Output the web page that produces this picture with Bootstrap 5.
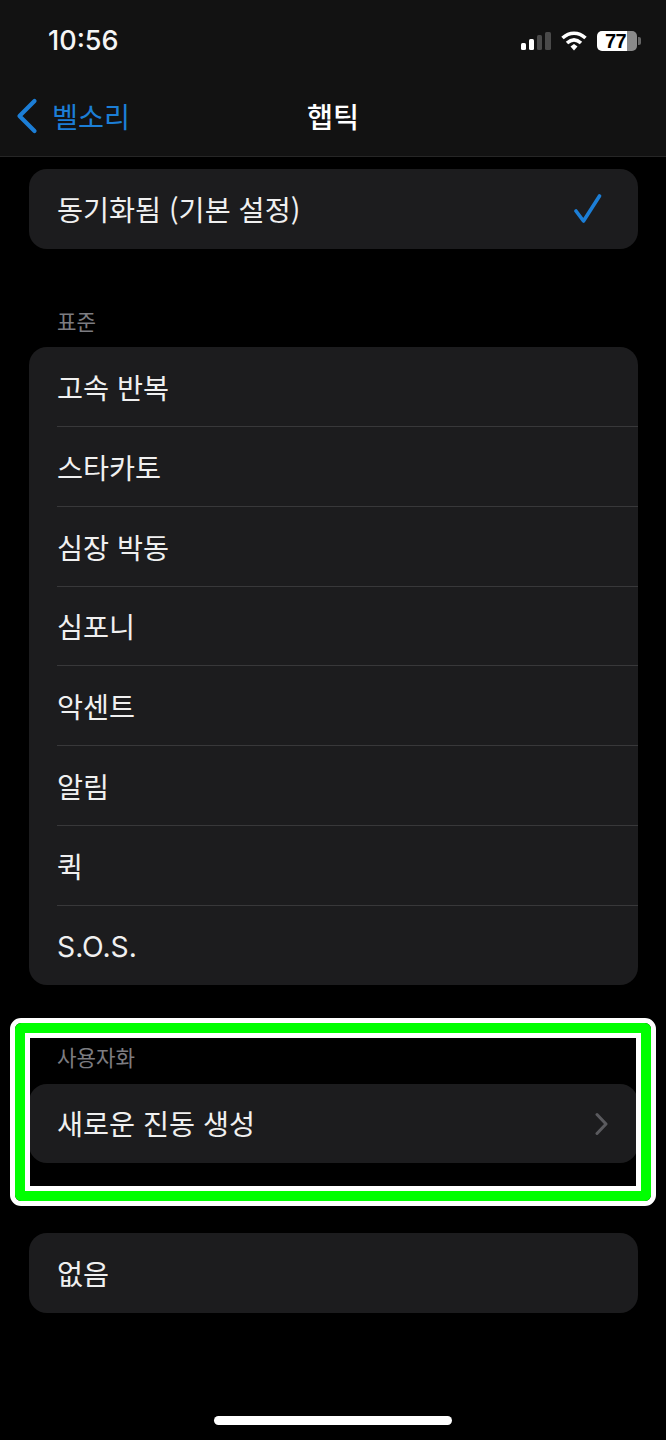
<!doctype html>
<html lang="ko"><head><meta charset="utf-8">
<link href="https://cdn.jsdelivr.net/npm/bootstrap@5.3.0/dist/css/bootstrap.min.css" rel="stylesheet">
<style>
html,body{background:#000;margin:0}
body{font-family:"Noto Sans CJK KR","Liberation Sans",sans-serif;color:#f2f2f2;width:666px;height:1440px;position:relative;overflow:hidden}
.top-bar{background:#121212;height:157px;border-bottom:1px solid #262626}
.status-row{height:81px;padding:0 25px 0 48px}
.clock{font-family:"Inter","Liberation Sans",sans-serif;font-weight:500;font-size:27px;line-height:1;color:#f5f5f5;margin-top:-1px}
.nav-row{height:70px;position:relative}
.back-link{color:#1c7ed6;font-size:28.3px;line-height:1;padding-left:16px;gap:14px}
.screen-title{position:absolute;left:0;right:0;top:0;bottom:0;font-size:28.3px;font-weight:500;color:#fff}
.content-area{padding:12px 28.500px 0}
.top-bar + .content-area{margin-top:0}
.group-card{background:#1c1c1e;border-radius:18px;overflow:hidden}
.item-row{height:79.750px;padding-left:28.500px;padding-right:35px;font-size:28.300px;line-height:1;position:relative;color:#f0f0f0}
.item-row.chev-row{padding-right:29px}
.item-row + .item-row::before{content:"";position:absolute;left:28.500px;right:0;top:-1px;height:1px;background:#38383a}
.latin-text{font-family:"Inter","Liberation Sans",sans-serif;padding-top:3px}
.group-label{font-size:21.200px;line-height:1;color:#7c7c81;padding-left:28.500px}
.hl-frame{position:absolute;left:10px;top:1017.500px;width:646px;height:188.200px;border:5px solid #fff;border-radius:11px;pointer-events:none}
.hl-frame::before{content:"";position:absolute;inset:0;border:10px solid #0f0;border-radius:6px}
.hl-frame::after{content:"";position:absolute;inset:10px;border:5.500px solid #fff}
.home-bar{position:absolute;left:214px;top:1416px;width:238px;height:9px;border-radius:5px;background:#fff}
.status-icons{gap:10px}
.batt{width:40px;height:20px;border-radius:5px;background:linear-gradient(90deg,#fff 0 75%,#8a8a8a 75%);color:#000;font:700 20px/20px "Liberation Sans",sans-serif;padding-left:8px;letter-spacing:-.5px}
.batt-tip{width:3px;height:8px;background:#666;border-radius:0 2px 2px 0;margin-left:1px}
</style></head><body>
<div class="top-bar">
 <div class="status-row d-flex align-items-center justify-content-between">
  <div class="clock">10:56</div>
  <div class="status-icons d-flex align-items-center">
   <svg width="30" height="18" viewBox="0 0 30 18"><rect x="0" y="11" width="5" height="7" rx="1.5" fill="#fff"/><rect x="8" y="7" width="5" height="11" rx="1.5" fill="#fff"/><rect x="16" y="3" width="5" height="15" rx="1.5" fill="#4a4a4a"/><rect x="24" y="0" width="6" height="18" rx="1.5" fill="#4a4a4a"/></svg>
   <svg width="26" height="20" viewBox="0 0 26 20"><path d="M1.500 7C8.500.6 17.500.6 24.500 7" fill="none" stroke="#fff" stroke-width="3.600"/><path d="M6 12C10.500 8 15.500 8 20 12" fill="none" stroke="#fff" stroke-width="3.600"/><path d="M9.500 15.500L13 13L16.500 15.500L13 19.500Z" fill="#fff"/></svg>
   <div class="d-flex align-items-center"><div class="batt">77</div><div class="batt-tip"></div></div>
  </div>
 </div>
 <div class="nav-row d-flex align-items-center">
  <div class="screen-title d-flex align-items-center justify-content-center">햅틱</div>
  <div class="back-link d-flex align-items-center">
   <svg width="22" height="36" viewBox="0 0 22 36"><path d="M18.500 3L3.500 18L18.500 33" fill="none" stroke="#1c7ed6" stroke-width="4.200" stroke-linecap="round" stroke-linejoin="round"/></svg>
   <span>벨소리</span>
  </div>
 </div>
</div>
<div class="content-area">
 <div class="group-card"><div class="item-row d-flex align-items-center justify-content-between"><span>동기화됨 (기본 설정)</span>
  <svg width="30" height="30" viewBox="0 0 30 30"><path d="M3 17L10.500 27L26.500 2" fill="none" stroke="#1c7ed6" stroke-width="3.600" stroke-linecap="round" stroke-linejoin="round"/></svg></div></div>
 <div class="group-label" style="margin-top:61px;margin-bottom:16.500px">표준</div>
 <div class="group-card">
  <div class="item-row d-flex align-items-center">고속 반복</div>
  <div class="item-row d-flex align-items-center">스타카토</div>
  <div class="item-row d-flex align-items-center">심장 박동</div>
  <div class="item-row d-flex align-items-center">심포니</div>
  <div class="item-row d-flex align-items-center">악센트</div>
  <div class="item-row d-flex align-items-center">알림</div>
  <div class="item-row d-flex align-items-center">퀵</div>
  <div class="item-row d-flex align-items-center"><span class="latin-text">S.O.S.</span></div>
 </div>
 <div class="group-label" style="margin-top:61px;margin-bottom:16px">사용자화</div>
 <div class="group-card"><div class="item-row chev-row d-flex align-items-center justify-content-between"><span>새로운 진동 생성</span>
  <svg width="14" height="24" viewBox="0 0 14 24"><path d="M2 2.500L11 12L2 21.500" fill="none" stroke="#5a5a5e" stroke-width="3" stroke-linecap="round" stroke-linejoin="round"/></svg></div></div>
 <div style="height:70px"></div>
 <div class="group-card"><div class="item-row d-flex align-items-center">없음</div></div>
</div>
<div class="hl-frame"></div>
<div class="home-bar"></div>
<script src="https://cdn.jsdelivr.net/npm/bootstrap@5.3.0/dist/js/bootstrap.bundle.min.js"></script>
</body></html>
